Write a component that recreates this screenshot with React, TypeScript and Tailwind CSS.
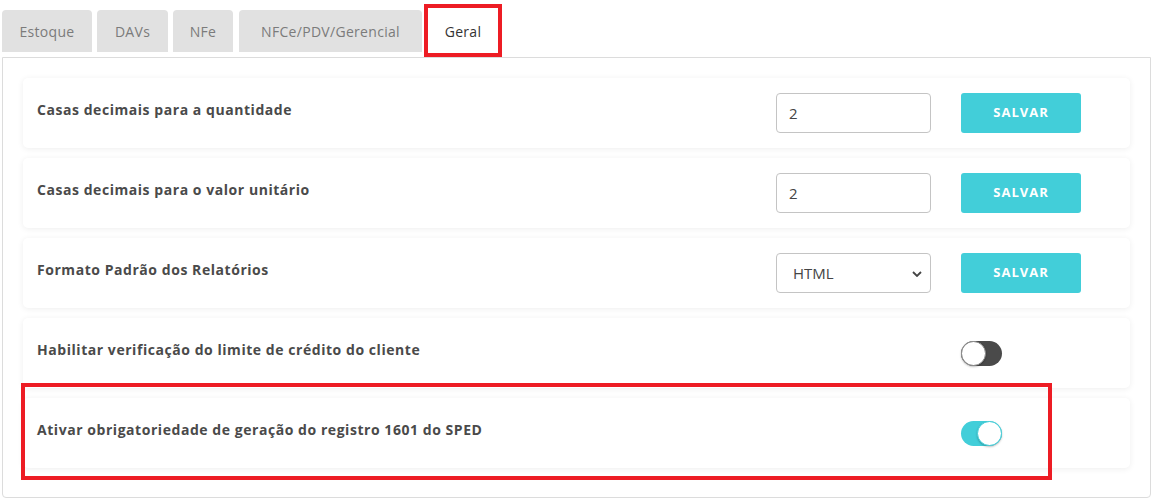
import { useState } from "react";

const tabs = [
  { name: "Estoque", w: "w-[90px]", gap: "" },
  { name: "DAVs", w: "w-[71px]", gap: "ml-[5px]" },
  { name: "NFe", w: "w-[60px]", gap: "ml-[5px]" },
  { name: "NFCe/PDV/Gerencial", w: "w-[183px]", gap: "ml-[6px]" },
  { name: "Geral", w: "w-[78px]", gap: "ml-[2px]" },
];

type Row =
  | { label: string; kind: "input"; value: string }
  | { label: string; kind: "select"; value: string }
  | { label: string; kind: "toggle"; value: boolean };

const rows: Row[] = [
  { label: "Casas decimais para a quantidade", kind: "input", value: "2" },
  { label: "Casas decimais para o valor unitário", kind: "input", value: "2" },
  { label: "Formato Padrão dos Relatórios", kind: "select", value: "HTML" },
  { label: "Habilitar verificação do limite de crédito do cliente", kind: "toggle", value: false },
  { label: "Ativar obrigatoriedade de geração do registro 1601 do SPED", kind: "toggle", value: true },
];

function Toggle({ initial }: { initial: boolean }) {
  const [on, setOn] = useState(initial);
  return (
    <button
      type="button"
      onClick={() => setOn(!on)}
      className={`relative h-[25px] w-[41px] rounded-full ${on ? "bg-[#42ced9]" : "bg-[#4a4a4a]"}`}
    >
      <span
        className={`absolute top-0 h-[25px] w-[25px] rounded-full border border-[#8a8a8a] bg-white shadow-[0_1px_2px_rgba(0,0,0,0.25)] ${
          on ? "right-0 border-[#42ced9]" : "left-0"
        }`}
      />
    </button>
  );
}

function SaveButton() {
  return (
    <button
      type="button"
      className="h-[40px] w-[120px] rounded-[3px] bg-[#42ced9] text-[13px] font-bold tracking-[1px] text-white"
    >
      SALVAR
    </button>
  );
}

export default function App() {
  return (
    <div className="relative w-[1156px] h-[501px] bg-white font-['Open_Sans',sans-serif] text-[#333]">
      {/* tab strip */}
      <div className="mb-[5px] flex items-end pl-[2px] pt-[10px]">
        {tabs.map((t) => (
          <div
            key={t.name}
            className={`flex h-[42px] items-center justify-center rounded-t-[4px] text-[14px] tracking-[0.3px] ${t.w} ${t.gap} ${
              t.name === "Geral" ? "bg-white text-[#333]" : "bg-[#e1e1e1] text-[#7b7b7b]"
            }`}
          >
            {t.name}
          </div>
        ))}
      </div>

      {/* settings panel */}
      <div className="ml-[2px] mr-[5px] rounded-b-[4px] border border-[#dcdcdc] px-[20px] pb-[29px] pt-[20px]">
        <div className="flex flex-col gap-[10px]">
          {rows.map((r) => (
            <div
              key={r.label}
              className="grid h-[70px] grid-cols-[1fr_155px_120px] items-center gap-x-[30px] rounded-[5px] bg-white pl-[14px] pr-[49px] shadow-[0_1px_6px_rgba(0,0,0,0.07)]"
            >
              <div className="-mt-[8px] text-[14px] font-bold tracking-[0.55px] text-[#4a4a4a]">{r.label}</div>
              {r.kind === "input" && (
                <>
                  <input
                    defaultValue={r.value}
                    className="h-[40px] w-[155px] rounded-[4px] border border-[#c4c4c4] px-[12px] text-[15px] text-[#444] outline-none"
                  />
                  <SaveButton />
                </>
              )}
              {r.kind === "select" && (
                <>
                  <div className="relative h-[40px] w-[155px] rounded-[4px] border border-[#c4c4c4]">
                    <select
                      defaultValue={r.value}
                      className="h-full w-full appearance-none bg-transparent pl-[16px] text-[15px] text-[#444] outline-none"
                    >
                      <option>HTML</option>
                      <option>PDF</option>
                    </select>
                    <svg
                      viewBox="0 0 10 6"
                      className="pointer-events-none absolute right-[8px] top-[17px] h-[6px] w-[10px]"
                    >
                      <path d="M1 1l4 4 4-4" fill="none" stroke="#444" strokeWidth="1.8" />
                    </svg>
                  </div>
                  <SaveButton />
                </>
              )}
              {r.kind === "toggle" && (
                <>
                  <div />
                  <div className="flex">
                    <Toggle initial={r.value} />
                  </div>
                </>
              )}
            </div>
          ))}
        </div>
      </div>

      {/* highlight frames */}
      <div className="pointer-events-none absolute left-[424px] top-[4px] h-[53px] w-[78px] border-[4px] border-[#ed1c24]" />
      <div className="pointer-events-none absolute left-[21px] top-[383px] h-[97px] w-[1031px] border-[4px] border-[#ed1c24]" />
    </div>
  );
}
